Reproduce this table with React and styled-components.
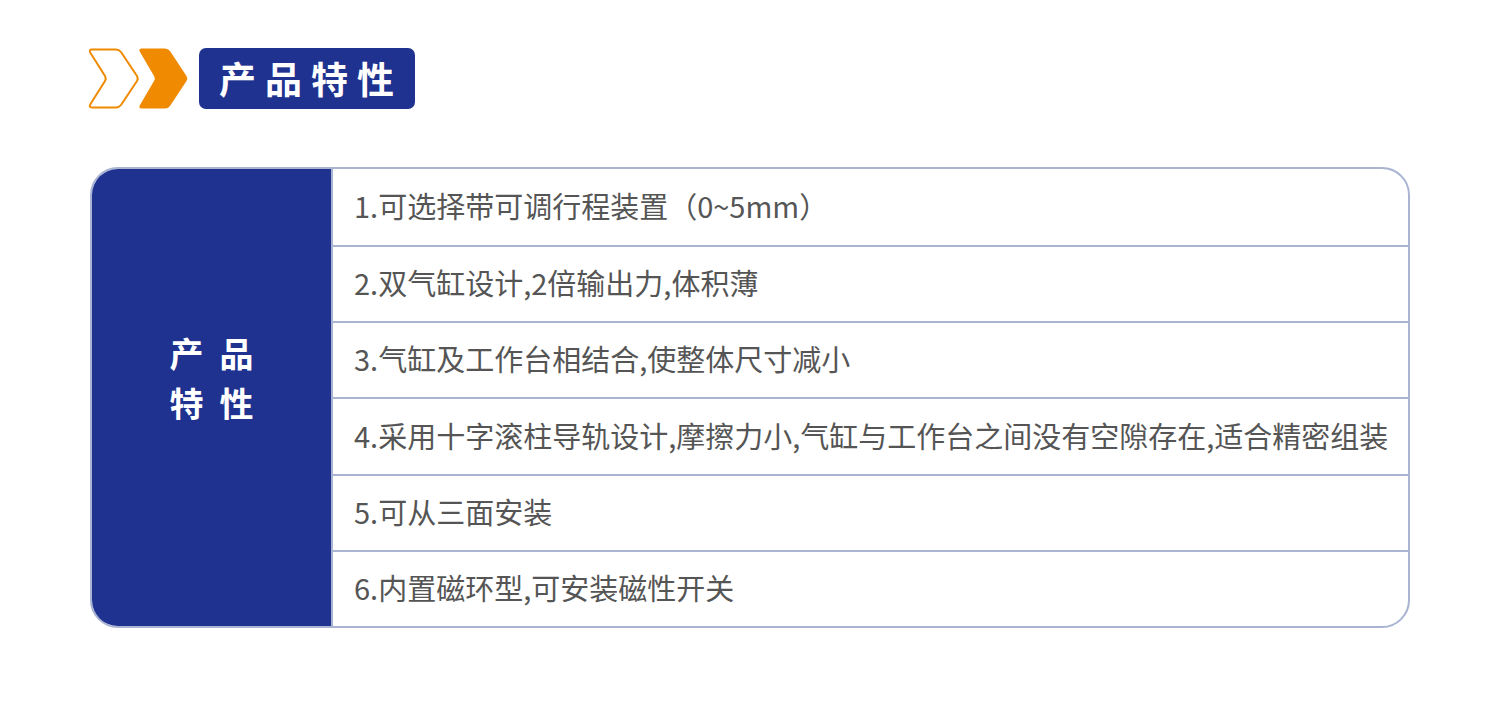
import React from 'react';
import styled, { createGlobalStyle } from 'styled-components';

const GlobalStyle = createGlobalStyle`
  html, body {
    margin: 0;
    padding: 0;
    background: #ffffff;
  }
  body {
    font-family: "Noto Sans CJK SC", "Open Sans", sans-serif;
  }
`;

const features = [
  '1.可选择带可调行程装置（0~5mm）',
  '2.双气缸设计,2倍输出力,体积薄',
  '3.气缸及工作台相结合,使整体尺寸减小',
  '4.采用十字滚柱导轨设计,摩擦力小,气缸与工作台之间没有空隙存在,适合精密组装',
  '5.可从三面安装',
  '6.内置磁环型,可安装磁性开关',
];

const Page = styled.div`
  width: 1500px;
  height: 702px;
  box-sizing: border-box;
  padding: 48px 90px 0 88px;
`;

const Header = styled.div`
  display: flex;
  align-items: center;
  gap: 11px;
  height: 61px;
`;

const Label = styled.div`
  height: 61px;
  width: 216px;
  box-sizing: border-box;
  background: #1f3290;
  border-radius: 7px;
  color: #ffffff;
  font-size: 37px;
  font-weight: 700;
  letter-spacing: 9px;
  display: flex;
  align-items: center;
  padding-left: 20px;
  padding-bottom: 2px;
`;

const Table = styled.div`
  margin-top: 58px;
  margin-left: 2px;
  display: grid;
  grid-template-columns: 241px 1fr;
  border: 2px solid #a9b4d2;
  border-radius: 28px;
  overflow: hidden;
  height: 461px;
  box-sizing: border-box;
`;

const Side = styled.div`
  background: #1f3290;
  color: #ffffff;
  font-size: 34px;
  font-weight: 700;
  letter-spacing: 16px;
  line-height: 50px;
  display: flex;
  flex-direction: column;
  align-items: center;
  justify-content: center;
  padding-left: 16px;
  padding-bottom: 40px;
  border-right: 2px solid #a9b4d2;
`;

const Rows = styled.div`
  display: grid;
  grid-template-rows: repeat(6, 1fr);
`;

const Row = styled.div`
  display: flex;
  align-items: center;
  padding-left: 21px;
  padding-bottom: 4px;
  font-size: 29px;
  color: #555555;
  border-top: ${p => (p.first ? 'none' : '2px solid #a9b4d2')};
  white-space: nowrap;
`;

const Chevrons = () => (
  <svg width="100" height="61" viewBox="0 0 100 61">
    <path
      d="M4 1.5 H28 Q31 1.5 33 4 L49 28 Q50.5 30.5 49 33 L33 57 Q31 59.5 28 59.5 H4 Q0.5 59.5 2.5 56 L17 33 Q18.5 30.5 17 28 L2.5 5 Q0.5 1.5 4 1.5 Z"
      fill="none"
      stroke="#f08a00"
      strokeWidth="2"
      strokeLinejoin="round"
    />
    <path
      d="M54 0.5 H77 Q80 0.5 82 3 L98.5 28 Q100 30.5 98.5 33 L82 58 Q80 60.5 77 60.5 H54 Q50 60.5 52 57 L66 33 Q67.5 30.5 66 28 L52 4 Q50 0.5 54 0.5 Z"
      fill="#f08a00"
    />
  </svg>
);

export default function App() {
  return (
    <Page>
      <GlobalStyle />
      <Header>
        <Chevrons />
        <Label>产品特性</Label>
      </Header>
      <Table>
        <Side>
          <div>产品</div>
          <div>特性</div>
        </Side>
        <Rows>
          {features.map((f, i) => (
            <Row key={i} first={i === 0}>
              {f}
            </Row>
          ))}
        </Rows>
      </Table>
    </Page>
  );
}
